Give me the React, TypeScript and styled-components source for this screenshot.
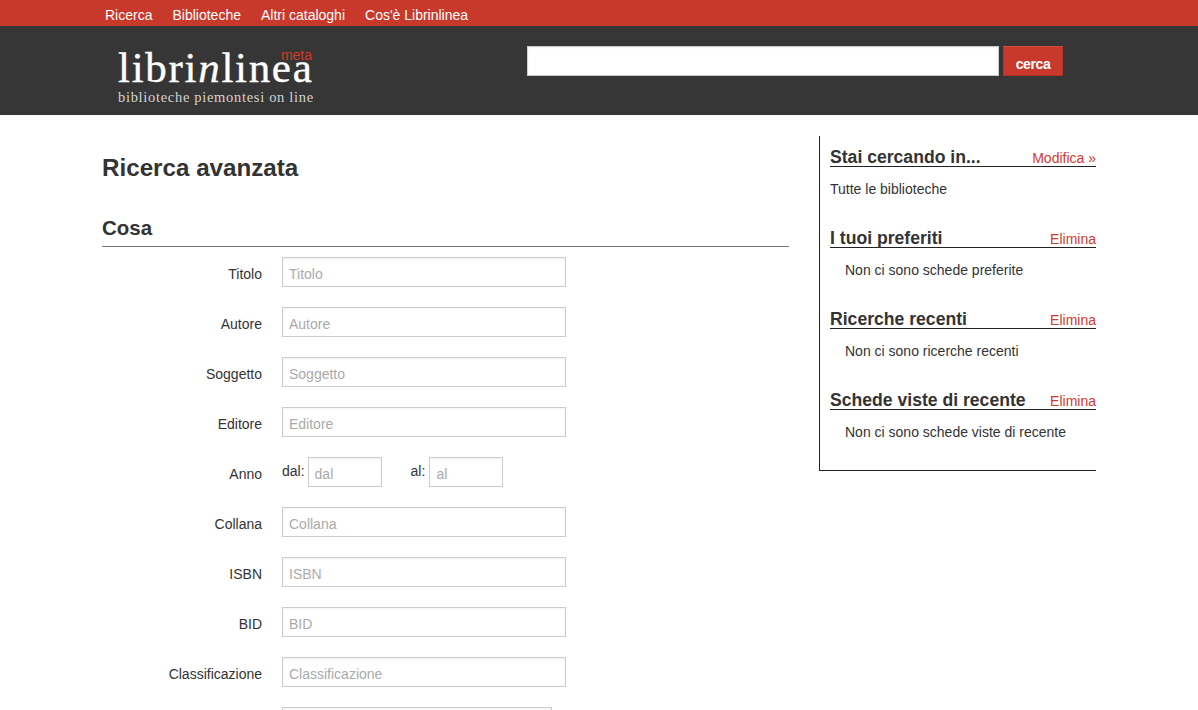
import React from 'react';
import styled, { createGlobalStyle } from 'styled-components';

const fields = [
  { label: 'Titolo' },
  { label: 'Autore' },
  { label: 'Soggetto' },
  { label: 'Editore' },
  { label: 'Anno', range: true },
  { label: 'Collana' },
  { label: 'ISBN' },
  { label: 'BID' },
  { label: 'Classificazione' },
];

const boxes = [
  { title: 'I tuoi preferiti', text: 'Non ci sono schede preferite' },
  { title: 'Ricerche recenti', text: 'Non ci sono ricerche recenti' },
  { title: 'Schede viste di recente', text: 'Non ci sono schede viste di recente' },
];

const App: React.FC = () => {
  return (
    <>
      <GlobalStyle />
      <TopNav>
        <NavLink>Ricerca</NavLink>
        <NavLink>Biblioteche</NavLink>
        <NavLink>Altri cataloghi</NavLink>
        <NavLink>Cos'è Librinlinea</NavLink>
      </TopNav>
      <Header>
        <Logo>
          <Meta>meta</Meta>
          <LogoName>
            libri<i>n</i>linea
          </LogoName>
          <LogoTag>biblioteche piemontesi on line</LogoTag>
        </Logo>
        <SearchForm>
          <SearchInput />
          <SearchButton>cerca</SearchButton>
        </SearchForm>
      </Header>
      <Main>
        <Content>
          <PageTitle>Ricerca avanzata</PageTitle>
          <SectionTitle>Cosa</SectionTitle>
          <FieldList>
            {fields.map((f) => (
              <Row key={f.label}>
                <Label>{f.label}</Label>
                {f.range ? (
                  <RangeGroup>
                    <RangeLabel>dal:</RangeLabel>
                    <TextInput $width={74} placeholder="dal" />
                    <RangeLabel $after>al:</RangeLabel>
                    <TextInput $width={74} placeholder="al" />
                  </RangeGroup>
                ) : (
                  <TextInput $width={284} placeholder={f.label} />
                )}
              </Row>
            ))}
            <Row>
              <Label />
              <TextInput $width={270} />
            </Row>
          </FieldList>
        </Content>
        <Sidebar>
          <Box>
            <BoxHead>
              <BoxTitle>Stai cercando in...</BoxTitle>
              <BoxAction>Modifica »</BoxAction>
            </BoxHead>
            <BoxText>Tutte le biblioteche</BoxText>
          </Box>
          {boxes.map((b) => (
            <Box key={b.title}>
              <BoxHead>
                <BoxTitle>{b.title}</BoxTitle>
                <BoxAction>Elimina</BoxAction>
              </BoxHead>
              <BoxText $indent>{b.text}</BoxText>
            </Box>
          ))}
        </Sidebar>
      </Main>
    </>
  );
};

const GlobalStyle = createGlobalStyle`
  html, body {
    margin: 0;
    padding: 0;
    height: 710px;
    overflow: hidden;
    background: #fff;
    color: #333;
    font-family: "Liberation Sans", Arial, sans-serif;
    font-size: 14px;
  }
`;

const TopNav = styled.nav`
  display: flex;
  gap: 20px;
  height: 26px;
  padding: 0 0 0 105px;
  background-color: #c8392b;
  line-height: 30px;
  overflow: hidden;
`;

const NavLink = styled.a`
  color: #fff;
  font-size: 14px;
`;

const Header = styled.header`
  display: flex;
  height: 89px;
  background-color: #363636;
`;

const Logo = styled.div`
  position: relative;
  width: 196px;
  margin: 0 0 0 118px;
  padding-top: 22px;
  color: #fff;
  font-family: "Liberation Serif", "Times New Roman", serif;
`;

const Meta = styled.span`
  position: absolute;
  top: 21px;
  right: 2px;
  color: #cf3a22;
  font-family: "Liberation Sans", Arial, sans-serif;
  font-size: 14px;
  line-height: 16px;
`;

const LogoName = styled.div`
  font-size: 43px;
  line-height: 40px;
  letter-spacing: 1.7px;
  white-space: nowrap;
  -webkit-text-stroke: 0.4px #fff;

  i {
    font-style: italic;
  }
`;

const LogoTag = styled.div`
  margin-top: 1px;
  color: #d4d4d4;
  font-size: 14.5px;
  line-height: 16px;
  letter-spacing: 0.69px;
  white-space: nowrap;
`;

const SearchForm = styled.form`
  display: flex;
  gap: 4px;
  height: 30px;
  margin: 20px 0 0 213px;
`;

const SearchInput = styled.input`
  box-sizing: border-box;
  width: 472px;
  height: 30px;
  border: 1px solid #ccc;
  padding: 0 6px;
  background: #fff;
  box-shadow: inset 0 1px 2px rgba(0, 0, 0, 0.06);
  outline: none;
`;

const SearchButton = styled.button`
  box-sizing: border-box;
  width: 60px;
  height: 30px;
  border: 1px solid #b0342a;
  border-top-color: #d24c3e;
  padding: 5px 0 0;
  background-color: #c8392b;
  color: #fff;
  font-family: "Liberation Sans", Arial, sans-serif;
  font-size: 14px;
  font-weight: 700;
  letter-spacing: -0.4px;
`;

const Main = styled.main`
  display: flex;
  align-items: flex-start;
  padding: 21px 0 0 102px;
`;

const Content = styled.section`
  width: 687px;
  margin-right: 30px;
`;

const PageTitle = styled.h1`
  margin: 18px 0 0;
  color: #333;
  font-size: 24.2px;
  font-weight: 700;
  line-height: 28px;
`;

const SectionTitle = styled.h2`
  margin: 34px 0 0;
  padding-bottom: 6px;
  border-bottom: 1px solid #777;
  color: #333;
  font-size: 20.5px;
  font-weight: 700;
  line-height: 24px;
`;

const FieldList = styled.div`
  display: flex;
  flex-direction: column;
  gap: 20px;
  margin-top: 10px;
`;

const Row = styled.div`
  display: flex;
  align-items: flex-start;
  gap: 20px;
  height: 30px;
`;

const Label = styled.label`
  width: 160px;
  color: #333;
  font-size: 14px;
  line-height: 34px;
  text-align: right;
`;

const RangeGroup = styled.div`
  display: flex;
  align-items: flex-start;
`;

const RangeLabel = styled.span<{ $after?: boolean }>`
  margin: 0 ${(p) => (p.$after ? '4px' : '3px')} 0 ${(p) => (p.$after ? '29px' : '0')};
  color: #333;
  font-size: 14px;
  line-height: 28px;
`;

const TextInput = styled.input<{ $width: number }>`
  box-sizing: border-box;
  width: ${(p) => p.$width}px;
  height: 30px;
  border: 1px solid #ccc;
  padding: 3px 6px 0;
  background: #fff;
  box-shadow: inset 0 1px 2px rgba(0, 0, 0, 0.05);
  color: #333;
  font-family: "Liberation Sans", Arial, sans-serif;
  font-size: 14px;
  outline: none;

  &::placeholder {
    color: #aaa;
    opacity: 1;
  }
`;

const Sidebar = styled.aside`
  box-sizing: border-box;
  width: 277px;
  height: 335px;
  border-left: 1px solid #222;
  border-bottom: 1px solid #222;
  padding: 10px 0 0 10px;
`;

const Box = styled.div`
  height: 81px;
`;

const BoxHead = styled.div`
  display: flex;
  align-items: flex-end;
  justify-content: space-between;
  height: 20px;
  border-bottom: 1px solid #222;
`;

const BoxTitle = styled.h3`
  margin: 0 0 -2px;
  color: #333;
  font-size: 17.6px;
  font-weight: 700;
  line-height: 22px;
`;

const BoxAction = styled.a`
  color: #cf3a32;
  font-size: 14px;
  line-height: 18px;
  margin-bottom: -1px;
`;

const BoxText = styled.p<{ $indent?: boolean }>`
  margin: 13px 0 0;
  padding-left: ${(p) => (p.$indent ? '15px' : '0')};
  color: #333;
  font-size: 14px;
  line-height: 18px;
`;

export default App;
